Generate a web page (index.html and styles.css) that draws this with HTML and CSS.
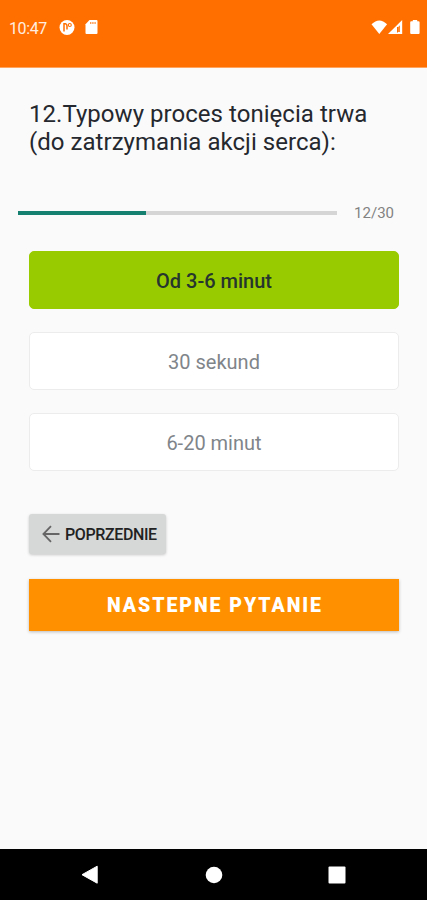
FILE: index.html
```html
<!DOCTYPE html>
<html lang="pl">
<head>
<meta charset="utf-8">
<title>Quiz</title>
<link rel="stylesheet" href="styles.css">
</head>
<body>
<div class="screen">
  <header class="status">
    <span class="clock">10:47</span>
    <svg class="app-icon" width="16" height="16" viewBox="0 0 16 16"><circle cx="8" cy="7.5" r="7.5" fill="#fff"/><path d="M5 11.5V3.8H6.5Q8 4 8 6V9.5" fill="none" stroke="#ff6f00" stroke-width="1.5"/><circle cx="10.8" cy="5" r="1.5" fill="none" stroke="#ff6f00" stroke-width="1.1"/></svg>
    <svg class="sd-icon" width="13" height="15" viewBox="0 0 13 15"><path d="M4.5 0H11.5Q12.5 0 12.5 1V13Q12.5 14 11.5 14H1.5Q.5 14 .5 13V4.2Z" fill="#fff"/><path d="M5 3H11" stroke="#ff9a50" stroke-width="1.8" stroke-dasharray="1.4 .8"/></svg>
    <div class="signals">
      <svg width="17" height="15" viewBox="0 0 17 15"><path d="M.5 4.2Q8.3-3.4 16.1 4.2L8.3 14Z" fill="#fff"/></svg>
      <svg width="15" height="15" viewBox="0 0 15 15"><path d="M14.2 0V14H0Z" fill="#fff"/><path d="M12 5.2V12H9.7V7.5Z" fill="#ff8a30"/><path d="M9.5 7V12.5" stroke="#ff6f00"/></svg>
      <svg class="battery" width="10" height="15" viewBox="0 0 10 15"><path d="M2.8 0H7.2V1.2H8.5Q9.6 1.2 9.6 2.3V13Q9.6 14 8.6 14H1.2Q.2 14 .2 13V2.3Q.2 1.2 1.3 1.2H2.8Z" fill="#fff"/></svg>
    </div>
  </header>
  <main class="content">
    <h1 class="question">12.Typowy proces tonięcia trwa<br>(do zatrzymania akcji serca):</h1>
    <div class="progress">
      <div class="track"><div class="fill" style="width:40%"></div></div>
      <span class="count">12/30</span>
    </div>
    <div class="answers">
      <button class="answer correct">Od 3-6 minut</button>
      <button class="answer">30 sekund</button>
      <button class="answer">6-20 minut</button>
    </div>
    <button class="previous">
      <svg width="18" height="18" viewBox="0 0 18 18"><path d="M17.5 9H1.5M9 1.2L1.4 9L9 16.8" fill="none" stroke="#666" stroke-width="1.8"/></svg>
      <span>POPRZEDNIE</span>
    </button>
    <button class="next">NASTEPNE PYTANIE</button>
  </main>
  <nav class="navbar">
    <svg width="18" height="20" viewBox="0 0 18 20"><path d="M16.2 1.2V18.2L1 9.7Z" fill="#fff" stroke="#fff" stroke-linejoin="round"/></svg>
    <svg width="18" height="18" viewBox="0 0 18 18"><circle cx="9" cy="9" r="8.3" fill="#fff"/></svg>
    <svg width="18" height="18" viewBox="0 0 18 18"><rect x=".5" y=".5" width="17" height="17" rx="1" fill="#fff"/></svg>
  </nav>
</div>
</body>
</html>
```

FILE: styles.css
```css
* { box-sizing: border-box; }
body { margin: 0; font-family: Roboto, "Noto Sans", sans-serif; }
svg { display: block; flex: none; }
button { border: 0; padding: 0; font-family: inherit; }
.screen { width: 427px; height: 900px; display: flex; flex-direction: column; background: #fafafa; }
.status { height: 68px; flex: none; display: flex; align-items: flex-start; padding: 20px 7px 0 9px; background: #ff6f00; border-bottom: 1px solid #ffa45f; color: #fff; }
.clock { width: 50px; font-size: 16px; line-height: 17px; letter-spacing: -.4px; color: #ffeee0; }
.sd-icon { margin-left: 10px; }
.signals { display: flex; margin-left: auto; }
.battery { margin-left: 7px; }
.content { flex: 1; display: flex; flex-direction: column; align-items: flex-start; padding: 32px 28px 0 29px; }
.question { margin: 0; font-size: 24px; line-height: 28px; letter-spacing: .04px; font-weight: 400; color: #25282e; white-space: nowrap; }
.progress { display: flex; align-items: center; width: 376px; height: 20px; margin: 47px 0 0 -11px; }
.track { width: 319px; height: 4px; background: #d5d5d5; }
.fill { height: 4px; background: #168070; }
.count { margin-left: auto; font-size: 15px; line-height: 20px; color: #828282; }
.answers { width: 370px; display: flex; flex-direction: column; gap: 23px; margin-top: 28px; }
.answer { height: 58px; padding-top: 2px; border: 1px solid #ececec; border-radius: 5px; background: #fff; color: #80858a; font-size: 20px; line-height: 24px; }
.correct { background: #99cc00; border-color: #99cc00; color: #26352e; font-weight: 500; }
.previous { display: flex; align-items: center; gap: 5px; width: 137px; height: 40px; margin-top: 43px; padding-left: 13px; border-radius: 3px; background: #d6d8d7; box-shadow: 0 1px 3px rgba(0, 0, 0, .2); color: #222; font-size: 16px; font-weight: 500; letter-spacing: -.38px; }
.next { width: 370px; height: 52px; margin-top: 25px; padding-left: 2px; background: #ff9100; box-shadow: 0 1px 3px rgba(0, 0, 0, .25); color: #fff; font-size: 19.5px; font-weight: 900; letter-spacing: 1.95px; }
.navbar { height: 51px; flex: none; display: flex; align-items: center; justify-content: space-between; padding: 0 81px; background: #000; }
```
